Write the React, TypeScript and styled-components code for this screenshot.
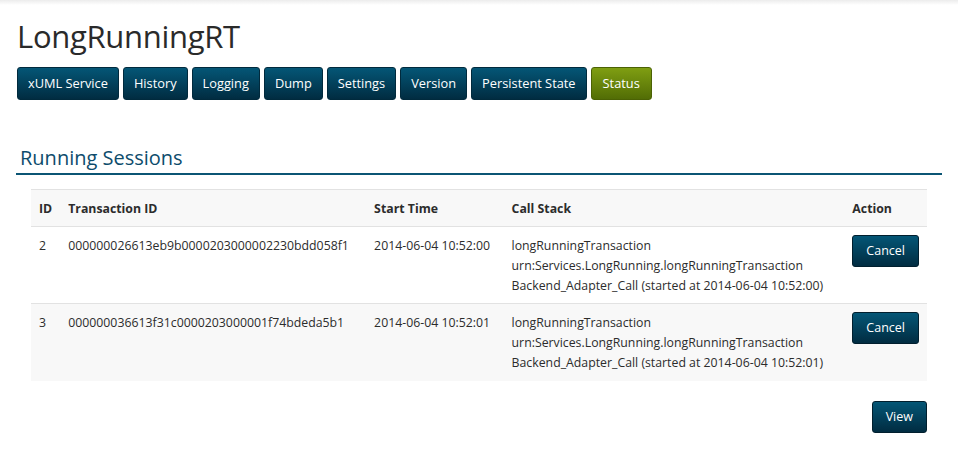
import styled, { createGlobalStyle, css } from "styled-components";

const GlobalStyle = createGlobalStyle`
  html, body {
    margin: 0;
    padding: 0;
    background: #ffffff;
  }
  body {
    font-family: "Open Sans", "Liberation Sans", sans-serif;
    color: #333;
  }
`;

const Page = styled.div`
  position: relative;
  width: 958px;
  min-height: 462px;
  padding: 0 16px 0 16px;
  box-sizing: border-box;
  background: linear-gradient(to bottom, #ececec 0px, #ffffff 5px);
`;

const Title = styled.h1`
  margin: 0;
  padding: 16px 0 0 1px;
  font-size: 31px;
  font-weight: 400;
  line-height: 40px;
  color: #2a2a2a;
  letter-spacing: -0.3px;
`;

const Nav = styled.div`
  display: flex;
  gap: 4px;
  margin-top: 11px;
  padding-left: 1px;
`;

const btnBase = css`
  font-family: "Open Sans", "Liberation Sans", sans-serif;
  font-size: 12.5px;
  color: #ffffff;
  border-radius: 3px;
  cursor: pointer;
  line-height: 1;
`;

const NavButton = styled.button<{ $active?: boolean }>`
  ${btnBase}
  font-size: 12.8px;
  height: 33px;
  padding: 0 ${(p) => (p.$active ? 11 : 10)}px;
  border: 1px solid ${(p) => (p.$active ? "#4b6204" : "#012a3d")};
  background: ${(p) =>
    p.$active
      ? "linear-gradient(to bottom, #7f9e12, #526d05)"
      : "linear-gradient(to bottom, #045676, #012c41)"};
`;

const Section = styled.div`
  margin-top: 45px;
`;

const SectionTitle = styled.h2`
  margin: 0;
  padding: 0 0 2px 4px;
  font-size: 20px;
  font-weight: 400;
  line-height: 26px;
  color: #0d4c6c;
  border-bottom: 2px solid #0b5574;
  width: 922px;
`;

const Table = styled.table`
  margin: 14px 0 0 15px;
  width: 896px;
  border-collapse: collapse;
  font-size: 12.3px;
  color: #2c2c2c;
`;

const HeadRow = styled.tr`
  background: #f8f8f8;
  border-top: 1px solid #e2e2e2;
  border-bottom: 1px solid #e2e2e2;
`;

const Th = styled.th<{ $w?: number }>`
  text-align: left;
  font-weight: 700;
  height: 37px;
  padding: 0 8px;
  width: ${(p) => (p.$w ? `${p.$w}px` : "auto")};
  box-sizing: border-box;
`;

const Row = styled.tr<{ $striped?: boolean }>`
  background: ${(p) => (p.$striped ? "#f8f8f8" : "#ffffff")};
  border-bottom: 1px solid ${(p) => (p.$striped ? "#f8f8f8" : "#e2e2e2")};
`;

const Td = styled.td`
  vertical-align: top;
  padding: 9px 8px 7px 8px;
  line-height: 20px;
  height: 60px;
`;

const ActionTd = styled(Td)`
  padding-top: 8px;
`;

const ActionButton = styled.button`
  ${btnBase}
  height: 32px;
  padding: 0 13px;
  border: 1px solid #011f2e;
  background: linear-gradient(to bottom, #045676, #012c41);
`;

const Footer = styled.div`
  display: flex;
  justify-content: flex-end;
  width: 911px;
  margin-top: 20px;
`;

const tabs = [
  "xUML Service",
  "History",
  "Logging",
  "Dump",
  "Settings",
  "Version",
  "Persistent State",
  "Status",
];

const sessions = [
  {
    id: 2,
    tx: "000000026613eb9b0000203000002230bdd058f1",
    start: "2014-06-04 10:52:00",
  },
  {
    id: 3,
    tx: "000000036613f31c0000203000001f74bdeda5b1",
    start: "2014-06-04 10:52:01",
  },
];

export default function App() {
  return (
    <>
      <GlobalStyle />
      <Page>
        <Title>LongRunningRT</Title>
        <Nav>
          {tabs.map((t) => (
            <NavButton key={t} $active={t === "Status"}>
              {t}
            </NavButton>
          ))}
        </Nav>
        <Section>
          <SectionTitle>Running Sessions</SectionTitle>
          <Table>
            <thead>
              <HeadRow>
                <Th $w={29}>ID</Th>
                <Th $w={306}>Transaction ID</Th>
                <Th $w={138}>Start Time</Th>
                <Th $w={341}>Call Stack</Th>
                <Th>Action</Th>
              </HeadRow>
            </thead>
            <tbody>
              {sessions.map((s, i) => (
                <Row key={s.id} $striped={i % 2 === 1}>
                  <Td>{s.id}</Td>
                  <Td>{s.tx}</Td>
                  <Td>{s.start}</Td>
                  <Td>
                    longRunningTransaction
                    <br />
                    urn:Services.LongRunning.longRunningTransaction
                    <br />
                    Backend_Adapter_Call (started at {s.start})
                  </Td>
                  <ActionTd>
                    <ActionButton>Cancel</ActionButton>
                  </ActionTd>
                </Row>
              ))}
            </tbody>
          </Table>
          <Footer>
            <ActionButton>View</ActionButton>
          </Footer>
        </Section>
      </Page>
    </>
  );
}
